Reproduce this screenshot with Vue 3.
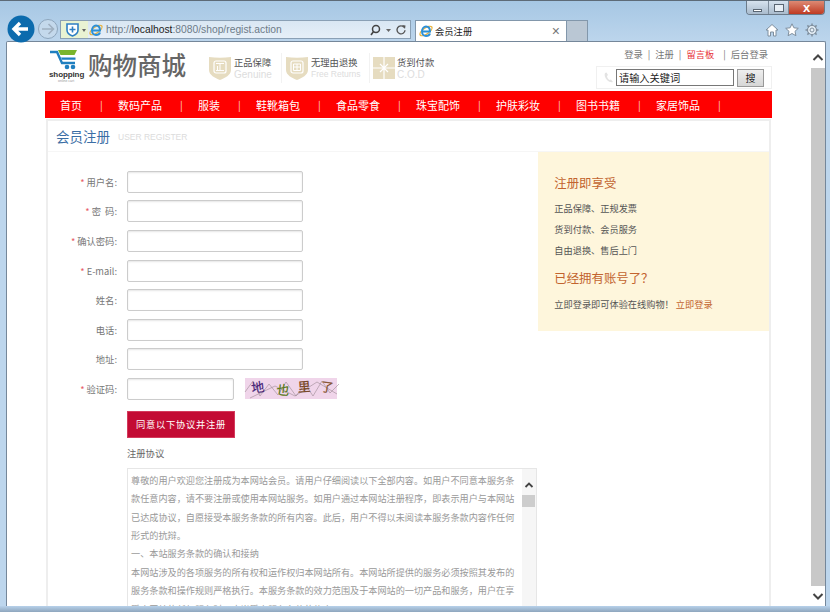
<script setup>
const navItems = ['首页', '数码产品', '服装', '鞋靴箱包', '食品零食', '珠宝配饰', '护肤彩妆', '图书书籍', '家居饰品']

const fields = [
  { label: '用户名:', required: true },
  { label: '密  码:', required: true },
  { label: '确认密码:', required: true },
  { label: 'E-mail:', required: true },
  { label: '姓名:' },
  { label: '电话:' },
  { label: '地址:' }
]

const agreement = [
  '尊敬的用户欢迎您注册成为本网站会员。请用户仔细阅读以下全部内容。如用户不同意本服务条',
  '款任意内容，请不要注册或使用本网站服务。如用户通过本网站注册程序，即表示用户与本网站',
  '已达成协议，自愿接受本服务条款的所有内容。此后，用户不得以未阅读本服务条款内容作任何',
  '形式的抗辩。',
  '一、本站服务条款的确认和接纳',
  '本网站涉及的各项服务的所有权和运作权归本网站所有。本网站所提供的服务必须按照其发布的',
  '服务条款和操作规则严格执行。本服务条款的效力范围及于本网站的一切产品和服务，用户在享',
  '受本网站的任何服务时，应当受本服务条款的约束。'
]
</script>

<template>
  <div class="window">
    <div class="chrome">
      <div class="win-btns">
        <span class="win-btn min"><i class="min-mark"></i></span>
        <span class="win-btn"><i class="max-mark"></i></span>
        <span class="win-btn close">x</span>
      </div>
      <div class="toolbar">
        <svg class="nav-back" width="28" height="28" viewBox="0 0 28 28">
          <circle cx="14" cy="14" r="13.5" fill="#0c6bad" />
          <path d="M21 14H8M13 8l-6 6 6 6" fill="none" stroke="#fff" stroke-width="3.4" />
        </svg>
        <svg class="nav-forward" width="20" height="20" viewBox="0 0 20 20">
          <circle cx="10" cy="10" r="9.5" fill="#c4d9ec" stroke="#8ea6bd" />
          <path d="M4 10h11M10.500 5l5 5-5 5" fill="none" stroke="#9fb0c0" stroke-width="1.6" />
        </svg>
        <div class="address">
          <span class="shield">
            <svg width="13" height="14" viewBox="0 0 13 14">
              <path d="M1 1h11v6c0 3-2.500 5-5.500 6C3.500 12 1 10 1 7z" fill="#fff" stroke="#2f7fc4" stroke-width="1.6" />
              <path d="M6.500 3.500v6M3.500 6.500h6" stroke="#2f7fc4" stroke-width="1.6" />
            </svg>
            <i class="caret"></i>
          </span>
          <svg class="ie" width="14" height="14" viewBox="0 0 14 14">
            <ellipse cx="7" cy="7" rx="7" ry="3" transform="rotate(-35 7 7)" fill="none" stroke="#e9b23a" stroke-width="1.300" />
            <path d="M3 7.500h8C11 4 9 2.500 7 2.500S3 4.500 3 7.500s2 4.500 4 4.500 3.500-1 4-2.500" fill="none" stroke="#2b8fd8" stroke-width="2" />
          </svg>
          <span class="url">http://<b>localhost</b>:8080/shop/regist.action</span>
          <svg class="addr-tool" width="38" height="12" viewBox="0 0 38 12">
            <circle cx="6" cy="5" r="3.500" fill="none" stroke="#444" stroke-width="1.500" />
            <path d="M3.500 7.500L1 11" stroke="#444" stroke-width="1.600" />
            <path d="M16 5h5l-2.500 3z" fill="#666" />
            <path d="M34 3.200a4 4 0 1 0 1 3" fill="none" stroke="#555" stroke-width="1.400" />
            <path d="M32 1l3.500.5-.5 3.500z" fill="#555" />
          </svg>
        </div>
        <div class="tab">
          <svg width="14" height="14" viewBox="0 0 14 14">
            <ellipse cx="7" cy="7" rx="7" ry="3" transform="rotate(-35 7 7)" fill="none" stroke="#e9b23a" stroke-width="1.300" />
            <path d="M3 7.500h8C11 4 9 2.500 7 2.500S3 4.500 3 7.500s2 4.500 4 4.500 3.500-1 4-2.500" fill="none" stroke="#2b8fd8" stroke-width="2" />
          </svg>
          <span class="tab-title">会员注册</span>
          <span class="tab-close">×</span>
        </div>
        <div class="tab-new"></div>
        <div class="tools">
          <svg width="14" height="14" viewBox="0 0 14 14">
            <path d="M1 7l6-5.500L13 7h-2v6H8.500V9h-3v4H3V7z" fill="#fff" stroke="#7f8f9e" />
          </svg>
          <svg width="14" height="14" viewBox="0 0 14 14">
            <path d="M7 .8l1.900 4 4.400.5-3.300 3 .9 4.400L7 10.500l-3.900 2.200.9-4.400-3.300-3 4.400-.5z" fill="#fff" stroke="#7f8f9e" />
          </svg>
          <svg width="14" height="14" viewBox="0 0 14 14">
            <circle cx="7" cy="7" r="4.500" fill="#e6eff7" stroke="#7f8f9e" stroke-width="1.200" />
            <circle cx="7" cy="7" r="2" fill="none" stroke="#7f8f9e" />
            <path d="M7 .5v2.500M7 11v2.500M.5 7H3M11 7h2.500M2.400 2.400l1.800 1.800M9.800 9.800l1.800 1.800M11.600 2.400L9.800 4.200M4.200 9.800l-1.800 1.800" stroke="#7f8f9e" stroke-width="1.500" />
          </svg>
        </div>
      </div>
    </div>

    <div class="viewport">
      <div class="page">
        <div class="site">
          <header class="head">
            <div class="logo">
              <svg width="28" height="20" viewBox="0 0 28 20">
                <path d="M0 2h7l5 11h13" fill="none" stroke="#1f7fc0" stroke-width="2.400" />
                <path d="M8 0h19l-2.500 5H10.500z" fill="#7ab52c" />
                <path d="M11 7.500h14.500v2.200H12z" fill="#1f7fc0" />
                <circle cx="17" cy="17" r="2.300" fill="#1f7fc0" />
                <circle cx="23" cy="17" r="2.300" fill="#1f7fc0" />
              </svg>
              <span class="logo-word">shopping</span>
              <span class="logo-sub">online cart</span>
            </div>
            <span class="brand">购物商城</span>
            <div class="promise first">
              <svg width="24" height="26" viewBox="0 0 24 26">
                <path d="M1 2c7 1 15 1 22 0v13c0 5-6 8-11 10C7 23 1 20 1 15z" fill="#e6dcc0" />
                <rect x="6" y="6" width="12" height="12" rx="2" fill="none" stroke="#fff" stroke-width="1.200" />
                <path d="M8 8.500h8M12 8.500v7M9.500 11v4.500M8 15.500h8" stroke="#fff" />
              </svg>
              <div>
                <p class="promise-cn">正品保障</p>
                <p class="promise-en big">Genuine</p>
              </div>
            </div>
            <div class="promise second">
              <svg width="24" height="26" viewBox="0 0 24 26">
                <path d="M1 2c7 1 15 1 22 0v13c0 5-6 8-11 10C7 23 1 20 1 15z" fill="#e6dcc0" />
                <rect x="6" y="6" width="12" height="12" rx="2" fill="none" stroke="#fff" stroke-width="1.200" />
                <path d="M8.500 9h7v6.500h-7zM8.500 12h7M12 9v6.500" fill="none" stroke="#fff" />
              </svg>
              <div>
                <p class="promise-cn">无理由退换</p>
                <p class="promise-en">Free Returns</p>
              </div>
            </div>
            <div class="promise last">
              <svg width="22" height="22" viewBox="0 0 22 22">
                <rect width="22" height="22" fill="#e6dcc0" />
                <path d="M0 11h22M11 0v22M7 7l4 4 4-4M7 15l4-4 4 4" fill="none" stroke="#fff" stroke-width="1.200" />
              </svg>
              <div>
                <p class="promise-cn">货到付款</p>
                <p class="promise-en big">C.O.D</p>
              </div>
            </div>
            <div class="head-right">
              <div class="top-links">
                <a>登录</a><i>|</i><a>注册</a><i>|</i><a class="hot">留言板</a><i class="wide">|</i><a>后台登录</a>
              </div>
              <div class="search">
                <svg width="11" height="11" viewBox="0 0 11 11">
                  <path d="M2 1c-1 2 0 5 2 7s4 2.500 6 2l-2-2.500-1.500.5C5 7 4 5.500 4 4l1-1-1.500-2.500z" fill="#e3e3e3" />
                </svg>
                <input class="search-input" value="请输入关键词" />
                <button class="search-btn">搜</button>
              </div>
            </div>
          </header>

          <nav class="nav">
            <template v-for="item in navItems" :key="item">
              <a class="nav-item">{{ item }}</a>
              <span class="nav-sep">|</span>
            </template>
          </nav>

          <section class="panel">
            <div class="panel-title">
              <h2>会员注册</h2>
              <span>USER REGISTER</span>
            </div>
            <div class="panel-body">
              <div class="form">
                <div v-for="f in fields" :key="f.label" class="row">
                  <label class="row-label"><em v-if="f.required">*</em>{{ f.label }}</label>
                  <input class="text-input" />
                </div>
                <div class="row">
                  <label class="row-label"><em>*</em>验证码:</label>
                  <input class="text-input short" />
                  <svg class="captcha" width="92" height="21" viewBox="0 0 92 21">
                    <rect width="92" height="21" fill="#f0d5ea" />
                    <path d="M0 14L8 3l7 15L24 6l9 11 8-13 10 14 9-12 8 12 9-15 8 12 9-9M5 20L30 8l20 10 22-14 20 12" fill="none" stroke="#9c8a94" stroke-width=".6" />
                    <text x="7" y="15" rotate="-8" class="cap" fill="#4c2a7a">地</text>
                    <text x="31" y="16" rotate="6" class="cap" fill="#5a7a20">也</text>
                    <text x="53" y="14" rotate="-4" class="cap" fill="#7a4a2a">里</text>
                    <text x="75" y="13" rotate="8" class="cap" fill="#8a5a3a">了</text>
                  </svg>
                </div>
                <button class="submit">同意以下协议并注册</button>
                <p class="agree-title">注册协议</p>
                <div class="agree-box">
                  <div class="agree-text">
                    <p v-for="line in agreement" :key="line">{{ line }}</p>
                  </div>
                  <div class="agree-bar">
                    <svg width="14" height="10" viewBox="0 0 14 10">
                      <path d="M3.500 7L7 3.500 10.500 7" fill="none" stroke="#444" stroke-width="1.800" />
                    </svg>
                    <i class="agree-thumb"></i>
                  </div>
                </div>
              </div>
              <aside class="aside">
                <h3>注册即享受</h3>
                <p>正品保障、正规发票</p>
                <p>货到付款、会员服务</p>
                <p>自由退换、售后上门</p>
                <h3 class="second">已经拥有账号了？</h3>
                <p class="login-line">立即登录即可体验在线购物！ <a>立即登录</a></p>
              </aside>
            </div>
          </section>
        </div>
      </div>
      <div class="scrollbar">
        <svg width="14" height="26" viewBox="0 0 14 26">
          <path d="M2.500 18L7 13.500 11.500 18" fill="none" stroke="#444" stroke-width="2" />
        </svg>
        <i class="thumb"></i>
        <svg width="14" height="20" viewBox="0 0 14 20">
          <path d="M2.500 8L7 12.500 11.500 8" fill="none" stroke="#444" stroke-width="2" />
        </svg>
      </div>
    </div>
    <div class="bottom-edge"></div>
  </div>
</template>

<style>
html, body {
  margin: 0;
  overflow: hidden;
}
</style>

<style scoped>
* {
  box-sizing: border-box;
}

.window {
  width: 830px;
  height: 612px;
  display: flex;
  flex-direction: column;
  overflow: hidden;
  background: #bdd6ed;
  border-top: 1px solid #5d6b78;
  font-family: "Noto Sans CJK SC", "Liberation Sans", sans-serif;
  color: #666;
  font-size: 9.300px;
}

.chrome {
  height: 40px;
  flex: none;
  display: flex;
  flex-direction: column;
  background: linear-gradient(#a6c7e4, #bcd5ec);
}

.win-btns {
  align-self: flex-end;
  display: flex;
  height: 15px;
  margin-right: 5px;
  border: 1px solid #6b7a89;
  border-top: none;
  border-radius: 0 0 4px 4px;
  overflow: hidden;
}

.win-btn {
  width: 20px;
  display: flex;
  align-items: center;
  justify-content: center;
  background: linear-gradient(#d6e2ee, #a9bbcd);
  border-right: 1px solid #7d8c9b;
}

.win-btn.min {
  width: 22px;
}

.min-mark {
  width: 9px;
  height: 3px;
  margin-top: 5px;
  background: #fff;
  border: 1px solid #5a6673;
}

.max-mark {
  width: 10px;
  height: 8px;
  background: #e8eff6;
  border: 1px solid #5a6673;
}

.win-btn.close {
  width: 35px;
  border: none;
  background: linear-gradient(#dd8a74, #bf3a22);
  color: #fff;
  font: bold 13px/13px "Liberation Sans", sans-serif;
}

.toolbar {
  flex: 1;
  display: flex;
  align-items: flex-end;
  position: relative;
  padding-left: 7px;
}

.nav-back {
  margin-bottom: -2px;
}

.nav-forward {
  margin: 0 0 2px 3px;
}

.address {
  width: 351px;
  height: 19px;
  margin: 0 0 2px 2px;
  display: flex;
  align-items: center;
  background: linear-gradient(#d9e7f3, #e6eff8);
  border: 1px solid #8aa0b5;
}

.shield {
  width: 27px;
  height: 17px;
  display: flex;
  align-items: center;
  gap: 3px;
  padding-left: 5px;
  background: #e9f3d3;
}

.caret {
  border: 2.5px solid transparent;
  border-top: 3px solid #666;
  margin-top: 3px;
}

.ie {
  margin: 0 3px 0 1px;
}

.url {
  flex: 1;
  font: 10.300px "Liberation Sans", sans-serif;
  color: #6d7b88;
}

.url b {
  font-weight: normal;
  color: #222;
}

.addr-tool {
  margin-right: 2px;
}

.tab {
  width: 152px;
  height: 21px;
  margin-left: 4px;
  display: flex;
  align-items: center;
  padding: 0 6px 0 3px;
  background: #fff;
  border: 1px solid #8297ab;
  border-bottom: none;
}

.tab-title {
  flex: 1;
  margin-left: 2px;
  color: #222;
}

.tab-close {
  font: 14px "Liberation Sans", sans-serif;
  color: #777;
}

.tab-new {
  width: 21px;
  height: 21px;
  background: #bac7d4;
  border: 1px solid #8297ab;
  border-left: none;
  border-bottom: none;
}

.tools {
  display: flex;
  gap: 6px;
  margin: 0 0 4px auto;
  padding-right: 11px;
}

.viewport {
  height: 565px;
  flex: none;
  margin: 0 4px 0 6px;
  display: flex;
  background: #fff;
  border: 1px solid #75879a;
  border-bottom: none;
  border-radius: 2px 2px 0 0;
  overflow: hidden;
}

.page {
  flex: 1;
  overflow: hidden;
}

.site {
  width: 727px;
  margin-left: 38px;
}

.head {
  height: 49px;
  display: flex;
  align-items: flex-start;
}

.logo {
  width: 38px;
  height: 40px;
  margin-top: 8px;
  padding-left: 5px;
  display: flex;
  flex-direction: column;
  align-items: flex-start;
}

.logo-word {
  margin-left: -1px;
  font: bold 8px/9px "Liberation Sans", sans-serif;
  letter-spacing: -.1px;
  color: #333;
}

.logo-sub {
  margin-left: 8px;
  font: 3.500px/4px "Liberation Sans", sans-serif;
  color: #999;
}

.brand {
  width: 98px;
  margin: 5px 22px 0 5px;
  font-size: 24.500px;
  line-height: 36px;
  font-weight: 500;
  color: #666;
  white-space: nowrap;
}

.promise {
  display: flex;
  align-items: center;
  gap: 2px;
  height: 30px;
  margin-top: 11px;
  border-right: 1px solid #f2f2f2;
  white-space: nowrap;
}

.promise.first {
  width: 74px;
  margin-right: 3px;
}

.promise.second {
  width: 85px;
  margin-right: 3px;
}

.promise.last {
  border: none;
  gap: 2px;
}

.promise p {
  margin: 0;
}

.promise-cn {
  line-height: 13px;
  color: #555;
}

.promise-en {
  font: 8.500px/11px "Liberation Sans", sans-serif;
  color: #ddd;
}

.promise-en.big {
  font-size: 10px;
}

.head-right {
  margin-left: auto;
  width: 176px;
  display: flex;
  flex-direction: column;
}

.top-links {
  height: 23px;
  margin-bottom: 1px;
  display: flex;
  justify-content: flex-end;
  align-items: center;
  gap: 5px;
  padding-right: 4px;
  color: #777;
}

.top-links i {
  font-style: normal;
}

.top-links i.wide {
  margin-left: 4px;
}

.top-links .hot {
  color: #e8333a;
}

.search {
  height: 23px;
  display: flex;
  align-items: center;
  padding-left: 6px;
  border: 1px solid #f0f0f0;
}

.search-input {
  width: 118px;
  height: 17px;
  margin-left: 2px;
  padding: 0 2px;
  font: 10.200px "Noto Sans CJK SC", sans-serif;
  color: #222;
  border: 1px solid #777;
  border-radius: 0;
  outline: none;
}

.search-btn {
  width: 27px;
  height: 18px;
  margin-left: 3px;
  padding: 0;
  font: 10px "Noto Sans CJK SC", sans-serif;
  color: #222;
  background: linear-gradient(#eee, #d6d6d6);
  border: 1px solid #999;
}

.nav {
  height: 27px;
  display: flex;
  align-items: center;
  padding-left: 15px;
  background: #f00;
  color: #fff;
  font-size: 11px;
}

.nav-item {
  white-space: nowrap;
}

.nav-sep {
  width: 1px;
  margin: 0 16px 0 18px;
  font-size: 10px;
  color: #ffd9c8;
}

.nav-sep + .nav-item {
  margin-left: 1px;
}

.panel {
  margin: 1px 1px 0;
  border-left: 2px solid #eee;
  border-right: 2px solid #eee;
  border-top: 2px solid #eee;
}

.panel-title {
  height: 31px;
  display: flex;
  align-items: center;
  gap: 8px;
  padding: 0 0 1px 8px;
  border-bottom: 1px solid #f6f6f6;
}

.panel-title h2 {
  margin: 0;
  font-size: 13.500px;
  font-weight: normal;
  color: #3b6ea5;
}

.panel-title span {
  font: 8.500px "Liberation Sans", sans-serif;
  color: #dcdcdc;
  margin-top: 2px;
}

.panel-body {
  display: flex;
  align-items: flex-start;
}

.form {
  width: 491px;
  padding: 19px 0 0 79px;
}

.row {
  height: 21.600px;
  margin-bottom: 8px;
  display: flex;
  align-items: center;
  white-space: pre;
}

.row-label {
  width: 70px;
  margin: 0 10px 0 -80px;
  text-align: right;
  color: #777;
}

.row-label em {
  margin-right: 2px;
  font-style: normal;
  color: #e8606a;
}

.text-input {
  width: 176px;
  height: 22px;
  padding: 0;
  background: #fff;
  border: 1px solid #ccc;
  border-radius: 2px;
  box-shadow: inset 0 1px 2px #e6e6e6;
  outline: none;
}

.text-input.short {
  width: 107px;
}

.captcha {
  margin-left: 11px;
  overflow: visible;
}

.cap {
  font-size: 13px;
  font-weight: 500;
}

.submit {
  display: block;
  width: 108px;
  height: 27px;
  margin-top: 11px;
  padding: 0;
  font: 9.300px "Noto Sans CJK SC", sans-serif;
  letter-spacing: .7px;
  color: #fff;
  background: #c30b34;
  border: 1px solid #d43a5c;
}

.agree-title {
  margin: 8px 0 8px;
  line-height: 14px;
  color: #666;
}

.agree-box {
  width: 410px;
  height: 160px;
  display: flex;
  border: 1px solid #e6e6e6;
  overflow: hidden;
}

.agree-text {
  flex: 1;
  padding: 2px 0 0 3px;
  overflow: hidden;
}

.agree-text p {
  margin: 0;
  font-size: 9.150px;
  line-height: 18.400px;
  color: #999;
  white-space: nowrap;
}

.agree-bar {
  width: 14px;
  flex: none;
  display: flex;
  flex-direction: column;
  background: #f6f6f6;
  padding-top: 11px;
}

.agree-bar svg {
  display: block;
}

.agree-thumb {
  height: 12px;
  margin: 5px 1px 0 0;
  background: #cdcdcd;
}

.aside {
  width: 231px;
  height: 179px;
  padding: 22px 0 0 16px;
  background: #fef6dc;
  color: #555;
}

.aside h3 {
  margin: 0 0 6px;
  font-size: 12.400px;
  line-height: 18px;
  font-weight: normal;
  color: #c2642f;
}

.aside h3.second {
  margin: 8px 0 8px;
}

.aside p {
  margin: 0;
  line-height: 21px;
  font-size: 9.200px;
}

.aside .login-line {
  line-height: 18px;
}

.aside a {
  color: #c2642f;
}

.scrollbar {
  width: 14px;
  flex: none;
  display: flex;
  flex-direction: column;
}

.thumb {
  flex: 1;
  background: #c8c8c8;
}

.bottom-edge {
  flex: 1;
  background: linear-gradient(#b7d1ea, #8ea6bd);
}
</style>
